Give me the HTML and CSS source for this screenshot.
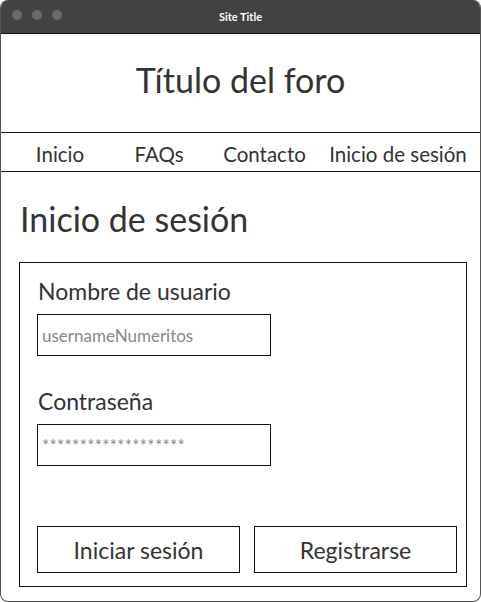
FILE: index.html
```html
<!DOCTYPE html>
<html lang="es">
<head>
    <meta charset="UTF-8">
    <meta name="viewport" content="width=device-width, initial-scale=1.0">
    <title>Site Title</title>
    <link rel="stylesheet" href="styles.css">
</head>
<body>
    <div class="window">
        <div class="titlebar">
            <div class="dots">
                <span class="dot"></span>
                <span class="dot"></span>
                <span class="dot"></span>
            </div>
            <div class="site-title">Site Title</div>
        </div>
        <div class="content">
            <header class="header">
                <h1>Título del foro</h1>
            </header>
            <nav class="nav">
                <a href="#">Inicio</a>
                <a href="#">FAQs</a>
                <a href="#">Contacto</a>
                <a href="#">Inicio de sesión</a>
            </nav>
            <main class="main">
                <h2>Inicio de sesión</h2>
                <form class="login">
                    <label for="user">Nombre de usuario</label>
                    <input type="text" id="user" placeholder="usernameNumeritos">

                    <label for="pass" class="second">Contraseña</label>
                    <input type="text" id="pass" class="pass" placeholder="*******************">

                    <div class="buttons">
                        <button type="submit">Iniciar sesión</button>
                        <button type="button">Registrarse</button>
                    </div>
                </form>
            </main>
        </div>
    </div>
</body>
</html>
```

FILE: styles.css
```css
* {
    box-sizing: border-box;
}
body {
    margin: 0;
    background: #fff;
    font-family: Lato, "Open Sans", sans-serif;
    color: #333;
}
.window {
    width: 481px;
    height: 602px;
    border: 1px solid #555;
    border-top: none;
    border-radius: 8px;
    overflow: hidden;
    display: flex;
    flex-direction: column;
}
.titlebar {
    height: 33px;
    background: #424242;
    position: relative;
    display: flex;
    align-items: center;
    justify-content: center;
}
.dots {
    position: absolute;
    left: 11px;
    top: 10px;
    display: flex;
    gap: 10px;
}
.dot {
    width: 10px;
    height: 10px;
    border-radius: 50%;
    background: #6a6a6a;
}
.site-title {
    color: #fff;
    font-size: 11px;
    font-weight: bold;
    margin-top: -1px;
}
.content {
    flex: 1;
    display: flex;
    flex-direction: column;
}
.header {
    height: 100px;
    border: 1.5px solid #111;
    margin: 0 -1px;
    display: flex;
    align-items: center;
    justify-content: center;
}
.header h1 {
    margin: -7px 0 0 0;
    font-weight: normal;
    font-size: 34px;
}
.nav {
    height: 39px;
    border: 1.5px solid #111;
    border-top: none;
    margin: 0 -1px;
    display: grid;
    grid-template-columns: 116px 82px 129px 138px;
    align-items: center;
    justify-items: center;
    padding: 3px 0 0 1px;
}
.nav a {
    color: #333;
    text-decoration: none;
    font-size: 20.5px;
    white-space: nowrap;
}
.main {
    padding: 26px 13px 0 18px;
}
.main h2 {
    margin: 0 0 23px 1px;
    font-weight: normal;
    font-size: 34px;
}
.login {
    border: 1.5px solid #111;
    height: 325px;
    padding: 14px 9px 13px 17px;
    display: flex;
    flex-direction: column;
}
.login label {
    font-size: 23px;
    margin-left: 1px;
    margin-bottom: 9px;
}
.login label.second {
    margin-top: 31px;
    margin-bottom: 9px;
}
.login input {
    width: 234px;
    height: 42px;
    border: 1.5px solid #111;
    font-family: inherit;
    font-size: 17px;
    padding: 0 4px;
    color: #333;
}
.login input::placeholder {
    color: #888;
}
.login input.pass::placeholder {
    letter-spacing: 0.3px;
}
.buttons {
    margin-top: auto;
    display: flex;
    gap: 14px;
}
.buttons button {
    flex: 1;
    height: 47px;
    background: #fff;
    border: 1.5px solid #111;
    font-family: inherit;
    font-size: 23px;
    color: #333;
}
```
